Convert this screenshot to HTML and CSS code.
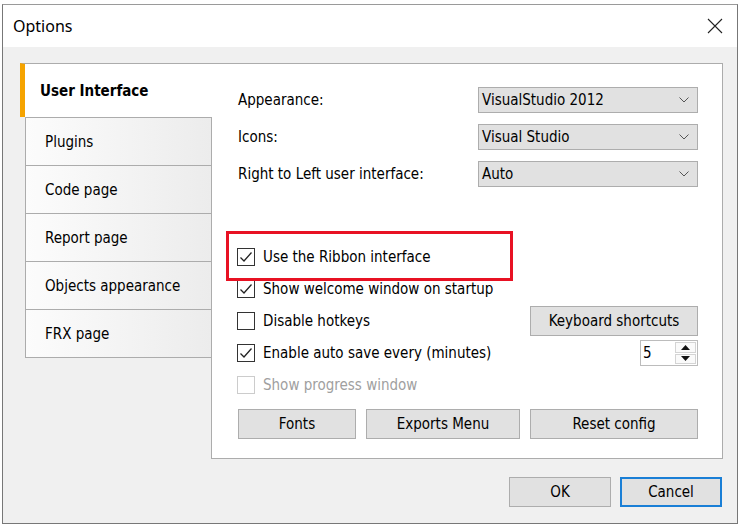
FILE: index.html
```html
<!DOCTYPE html>
<html>
<head>
<meta charset="utf-8">
<title>Options</title>
<link rel="stylesheet" href="styles.css">
</head>
<body>
<div class="window">
  <div class="titlebar">
    <span class="title">Options</span>
    <svg class="close" width="16" height="16" viewBox="0 0 16 16"><path d="M1 1 L15 15 M15 1 L1 15" stroke="#222" stroke-width="1.1" fill="none"/></svg>
  </div>
  <div class="body">
    <div class="tabs-area">
      <div class="tablist">
        <div class="tab selected">User Interface</div>
        <div class="tab">Plugins</div>
        <div class="tab">Code page</div>
        <div class="tab">Report page</div>
        <div class="tab">Objects appearance</div>
        <div class="tab">FRX page</div>
      </div>
      <div class="panel">
        <div class="fields">
          <div class="field-row">
            <span>Appearance:</span>
            <div class="combo"><span>VisualStudio 2012</span><svg width="10" height="6" viewBox="0 0 10 6"><path d="M0.5 0.5 L5 5 L9.5 0.5" stroke="#555" stroke-width="1" fill="none"/></svg></div>
          </div>
          <div class="field-row">
            <span>Icons:</span>
            <div class="combo"><span>Visual Studio</span><svg width="10" height="6" viewBox="0 0 10 6"><path d="M0.5 0.5 L5 5 L9.5 0.5" stroke="#555" stroke-width="1" fill="none"/></svg></div>
          </div>
          <div class="field-row">
            <span>Right to Left user interface:</span>
            <div class="combo"><span>Auto</span><svg width="10" height="6" viewBox="0 0 10 6"><path d="M0.5 0.5 L5 5 L9.5 0.5" stroke="#555" stroke-width="1" fill="none"/></svg></div>
          </div>
        </div>

        <div class="checks">
          <div class="check-row">
            <label class="check"><span class="box"><svg width="16" height="16" viewBox="0 0 16 16"><path d="M2.5 8.5 L6 12 L13.5 3.5" stroke="#222" stroke-width="1.3" fill="none"/></svg></span>Use the Ribbon interface</label>
          </div>
          <div class="check-row">
            <label class="check"><span class="box"><svg width="16" height="16" viewBox="0 0 16 16"><path d="M2.5 8.5 L6 12 L13.5 3.5" stroke="#222" stroke-width="1.3" fill="none"/></svg></span>Show welcome window on startup</label>
          </div>
          <div class="check-row">
            <label class="check"><span class="box"></span>Disable hotkeys</label>
            <button class="btn kb">Keyboard shortcuts</button>
          </div>
          <div class="check-row">
            <label class="check"><span class="box"><svg width="16" height="16" viewBox="0 0 16 16"><path d="M2.5 8.5 L6 12 L13.5 3.5" stroke="#222" stroke-width="1.3" fill="none"/></svg></span>Enable auto save every (minutes)</label>
            <div class="spinner">
              <span class="spin-val">5</span>
              <div class="spin-btns">
                <span class="spin-half"><svg width="9" height="5" viewBox="0 0 9 5"><polygon points="0,5 4.5,0 9,5" fill="#111"/></svg></span>
                <span class="spin-half"><svg width="9" height="5" viewBox="0 0 9 5"><polygon points="0,0 4.5,5 9,0" fill="#111"/></svg></span>
              </div>
            </div>
          </div>
          <div class="check-row disabled">
            <label class="check"><span class="box"></span>Show progress window</label>
          </div>
        </div>

        <div class="btn-row">
          <button class="btn fonts">Fonts</button>
          <button class="btn exports">Exports Menu</button>
          <button class="btn reset">Reset config</button>
        </div>

        <div class="highlight"></div>
      </div>
    </div>
    <div class="footer">
      <button class="btn dlg">OK</button>
      <button class="btn dlg default">Cancel</button>
    </div>
  </div>
</div>
</body>
</html>
```

FILE: styles.css
```css
body {
  margin: 0;
  background: #ffffff;
  font-family: "DejaVu Sans Condensed", "DejaVu Sans", sans-serif;
  font-size: 15px;
  color: #000;
}

.window {
  box-sizing: border-box;
  width: 736px;
  height: 520px;
  margin: 4px 0 0 2px;
  border: 1px solid #777;
  border-top-color: #9a9a9a;
  display: flex;
  flex-direction: column;
  background: #f0f0f0;
}

.titlebar {
  flex: none;
  height: 42px;
  background: #fff;
  display: flex;
  align-items: center;
  justify-content: space-between;
  padding: 0 14px 0 10px;
}

.title {
  font-family: "Noto Sans", sans-serif;
  font-size: 16px;
  color: #000;
}

.close { display: block; }

.body {
  flex: 1;
  display: flex;
  flex-direction: column;
  padding: 16px 14px 0 17px;
}

.tabs-area {
  display: flex;
  height: 396px;
}

.tablist {
  flex: none;
  width: 191px;
  display: flex;
  flex-direction: column;
}

.tab {
  box-sizing: border-box;
  height: 48px;
  margin-left: 5px;
  border: 1px solid #acacac;
  border-right: none;
  border-bottom: none;
  background: linear-gradient(to right, #fcfcfc, #ececec);
  display: flex;
  align-items: center;
  padding-left: 19px;
}

.tab:last-child {
  height: 49px;
  border-bottom: 1px solid #acacac;
}

.tab.selected {
  margin-left: 0;
  margin-right: -1px;
  height: 54px;
  border-left: 5px solid #f5a300;
  border-top: 1px solid #acacac;
  background: #fff;
  font-weight: bold;
  padding-left: 15px;
  position: relative;
  z-index: 1;
}

.panel {
  flex: 1;
  box-sizing: border-box;
  border: 1px solid #acacac;
  background: #fff;
  position: relative;
  padding: 23px 24px 0 26px;
}

.fields {
  display: flex;
  flex-direction: column;
  gap: 11px;
}

.field-row {
  display: flex;
  justify-content: space-between;
  align-items: center;
  height: 26px;
}

.combo {
  box-sizing: border-box;
  width: 220px;
  height: 26px;
  background: #e1e1e1;
  border: 1px solid #adadad;
  display: flex;
  align-items: center;
  justify-content: space-between;
  padding: 0 8px 0 3px;
}

.combo svg { display: block; }

.checks {
  margin-top: 54px;
}

.check-row {
  height: 32px;
  display: flex;
  align-items: center;
  justify-content: space-between;
}

.check {
  display: flex;
  align-items: center;
  gap: 8px;
  margin-left: -1px;
}

.box {
  box-sizing: border-box;
  width: 18px;
  height: 18px;
  border: 1px solid #333;
  background: #fff;
  display: block;
}

.box svg { display: block; }

.check-row.disabled { color: #a0a0a0; }
.check-row.disabled .box { border-color: #cccccc; }

.btn {
  box-sizing: border-box;
  height: 30px;
  padding: 0;
  background: #e1e1e1;
  border: 1px solid #adadad;
  font: inherit;
  color: #000;
}

.kb { width: 168px; }

.spinner {
  box-sizing: border-box;
  width: 58px;
  height: 26px;
  border: 1px solid #bcbcbc;
  background: #fff;
  display: flex;
}

.spin-val {
  flex: 1;
  padding-left: 2px;
  line-height: 24px;
}

.spin-btns {
  width: 21px;
  display: flex;
  flex-direction: column;
  padding: 1px 1px 1px 0;
  gap: 1px;
}

.spin-half {
  flex: 1;
  box-sizing: border-box;
  border: 1px solid #d4d4d4;
  background: #fafafa;
  display: flex;
  align-items: center;
  justify-content: center;
}

.spin-half svg { display: block; }

.btn-row {
  display: flex;
  gap: 10px;
  margin-top: 8px;
}

.fonts { width: 118px; }
.exports { width: 154px; }
.reset { width: 168px; }

.highlight {
  position: absolute;
  box-sizing: border-box;
  left: 14px;
  top: 167px;
  width: 287px;
  height: 50px;
  border: 3px solid #e81123;
}

.footer {
  display: flex;
  justify-content: flex-end;
  gap: 9px;
  margin-top: 18px;
  padding-right: 1px;
}

.dlg { width: 102px; }

.default {
  border: 2px solid #1a7fd6;
}
```
